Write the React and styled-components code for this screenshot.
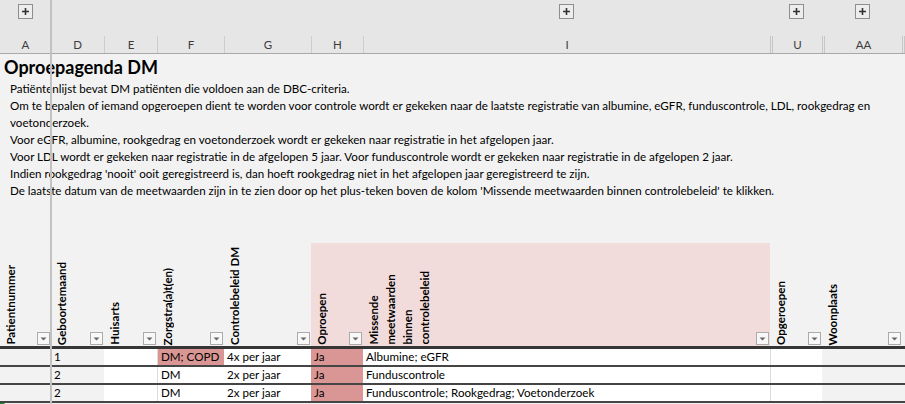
import React from 'react';
import styled, { createGlobalStyle } from 'styled-components';

const COLS = '51px 53px 53px 67px 87px 52px 407px 52px 80px 1fr';

const GlobalStyle = createGlobalStyle`
  html, body { margin: 0; padding: 0; background: #f2f2f2; }
  body { font-family: Lato, "Noto Sans", sans-serif; color: #000; overflow: hidden; }
  * { box-sizing: border-box; }
`;

const Page = styled.div`
  position: relative;
  width: 905px;
  height: 404px;
  overflow: hidden;
  background: #f2f2f2;
`;

const FreezeLine = styled.div`
  position: absolute;
  left: 50px;
  top: 0;
  bottom: 0;
  width: 2px;
  background: #c2c2c2;
`;

const ColumnBar = styled.div`
  display: grid;
  grid-template-columns: ${COLS};
  height: 54px;
  background: #e6e6e6;
  border-bottom: 1px solid #a9a9a9;
`;

const ColHead = styled.div`
  display: flex;
  flex-direction: column;
`;

const PlusSlot = styled.div`
  height: 36px;
  display: flex;
  justify-content: center;
  padding-top: 4px;
`;

const PlusButton = styled.div`
  width: 15px;
  height: 15px;
  border: 1px solid #8e8e8e;
  background: #ededed;
  display: flex;
  align-items: center;
  justify-content: center;
`;

const Letter = styled.div`
  flex: 1;
  display: flex;
  align-items: center;
  justify-content: center;
  font-size: 11.5px;
  color: #3c3c3c;
  border-left: ${p => (p.$sep === 'double' ? '3px double #c6c6c6' : p.$sep === 'single' ? '1px solid #cdcdcd' : 'none')};
`;

const Intro = styled.div`
  padding-left: 4px;
`;

const Title = styled.h1`
  margin: 0;
  height: 26px;
  font: 700 18px/26px Lato, "Noto Sans", sans-serif;
`;

const Lines = styled.div`
  padding-left: 6px;
  font-size: 11.6px;
  line-height: 17px;
`;

const Line = styled.div`
  white-space: nowrap;
`;

const HeaderRow = styled.div`
  display: grid;
  grid-template-columns: ${COLS};
  height: 106px;
  margin-top: 44px;
  border-bottom: 3px solid #363636;
`;

const HeadCell = styled.div`
  display: flex;
  align-items: flex-end;
  justify-content: space-between;
  padding: 0 1px 1px 2px;
  background: ${p => (p.$tint ? '#f2dcdb' : 'transparent')};
`;

const HeadLabel = styled.div`
  writing-mode: vertical-rl;
  transform: rotate(180deg);
  font: 700 11.5px/17px Lato, "Noto Sans", sans-serif;
  white-space: nowrap;
`;

const FilterButton = styled.div`
  flex: none;
  width: 13px;
  height: 13px;
  border: 1px solid #ababab;
  background: #f8f8f8;
  display: flex;
  align-items: center;
  justify-content: center;
`;

const DataRow = styled.div`
  display: grid;
  grid-template-columns: ${COLS};
  height: 18px;
  border-bottom: 2px solid #454545;
`;

const Cell = styled.div`
  background: ${p => p.$bg || 'transparent'};
  border-left: ${p => (p.$line ? '1px solid #dcdcdc' : 'none')};
  padding-left: 3px;
  font-size: 11.6px;
  line-height: 16px;
  white-space: nowrap;
  overflow: hidden;
`;

const ErrorCorner = styled.div`
  width: 0;
  height: 0;
  margin-left: -3px;
  border-top: 5px solid #1e8a36;
  border-right: 5px solid transparent;
`;

const Plus = () => (
  <svg width="9" height="9" viewBox="0 0 9 9">
    <path d="M4.5 1v7M1 4.5h7" stroke="#333" strokeWidth="1.6" />
  </svg>
);

const Arrow = () => (
  <svg width="7" height="4" viewBox="0 0 7 4">
    <polygon points="0.5,0.5 6.5,0.5 3.5,3.5" fill="#666" />
  </svg>
);

const letters = [
  { l: 'A', plus: true, sep: 'none' },
  { l: 'D', sep: 'none' },
  { l: 'E', sep: 'single' },
  { l: 'F', sep: 'single' },
  { l: 'G', sep: 'single' },
  { l: 'H', sep: 'single' },
  { l: 'I', plus: true, sep: 'single' },
  { l: 'U', plus: true, sep: 'double' },
  { l: 'AA', plus: true, sep: 'double' },
  { l: '', sep: 'double' },
];

const headers = [
  { label: ['Patientnummer'] },
  { label: ['Geboortemaand'] },
  { label: ['Huisarts'] },
  { label: ['Zorgstra(a)t(en)'] },
  { label: ['Controlebeleid DM'] },
  { label: ['Oproepen'], tint: true },
  { label: ['Missende', 'meetwaarden', 'binnen', 'controlebeleid'], tint: true },
  { label: ['Opgeroepen'] },
  { label: ['Woonplaats'] },
];

const PINK = '#da9694';
const WHITE = '#ffffff';

const rows = [
  ['', '1', '', 'DM; COPD', '4x per jaar', 'Ja', 'Albumine; eGFR', '', ''],
  ['', '2', '', 'DM', '2x per jaar', 'Ja', 'Funduscontrole', '', ''],
  ['', '2', '', 'DM', '2x per jaar', 'Ja', 'Funduscontrole; Rookgedrag; Voetonderzoek', '', ''],
];

const cellBg = (rowIdx, colIdx) => {
  if (colIdx === 3) return rowIdx === 0 ? PINK : WHITE;
  if (colIdx === 5) return PINK;
  if ([2, 4, 6, 7].includes(colIdx)) return WHITE;
  return 'transparent';
};

const introLines = [
  'Patiëntenlijst bevat DM patiënten die voldoen aan de DBC-criteria.',
  'Om te bepalen of iemand opgeroepen dient te worden voor controle wordt er gekeken naar de laatste registratie van albumine, eGFR, funduscontrole, LDL, rookgedrag en',
  'voetonderzoek.',
  'Voor eGFR, albumine, rookgedrag en voetonderzoek wordt er gekeken naar registratie in het afgelopen jaar.',
  'Voor LDL wordt er gekeken naar registratie in de afgelopen 5 jaar. Voor funduscontrole wordt er gekeken naar registratie in de afgelopen 2 jaar.',
  "Indien rookgedrag 'nooit' ooit geregistreerd is, dan hoeft rookgedrag niet in het afgelopen jaar geregistreerd te zijn.",
  "De laatste datum van de meetwaarden zijn in te zien door op het plus-teken boven de kolom 'Missende meetwaarden binnen controlebeleid' te klikken.",
];

export default function App() {
  return (
    <Page>
      <GlobalStyle />
      <ColumnBar>
        {letters.map((c, i) => (
          <ColHead key={i}>
            <PlusSlot>
              {c.plus && (
                <PlusButton>
                  <Plus />
                </PlusButton>
              )}
            </PlusSlot>
            <Letter $sep={c.sep}>{c.l}</Letter>
          </ColHead>
        ))}
      </ColumnBar>

      <Intro>
        <Title>Oproepagenda DM</Title>
        <Lines>
          {introLines.map((t, i) => (
            <Line key={i}>{t}</Line>
          ))}
        </Lines>
      </Intro>

      <HeaderRow>
        {headers.map((h, i) => (
          <HeadCell key={i} $tint={h.tint}>
            <HeadLabel>
              {h.label.map((part, j) => (
                <React.Fragment key={j}>
                  {j > 0 && <br />}
                  {part}
                </React.Fragment>
              ))}
            </HeadLabel>
            <FilterButton>
              <Arrow />
            </FilterButton>
          </HeadCell>
        ))}
        <HeadCell />
      </HeaderRow>

      {rows.map((r, ri) => (
        <DataRow key={ri}>
          {r.map((v, ci) => (
            <Cell key={ci} $bg={cellBg(ri, ci)} $line={ci === 3 || ci === 7}>
              {v}
            </Cell>
          ))}
          <Cell />
        </DataRow>
      ))}
      <DataRow>
        <Cell>
          <ErrorCorner />
        </Cell>
      </DataRow>

      <FreezeLine />
    </Page>
  );
}
